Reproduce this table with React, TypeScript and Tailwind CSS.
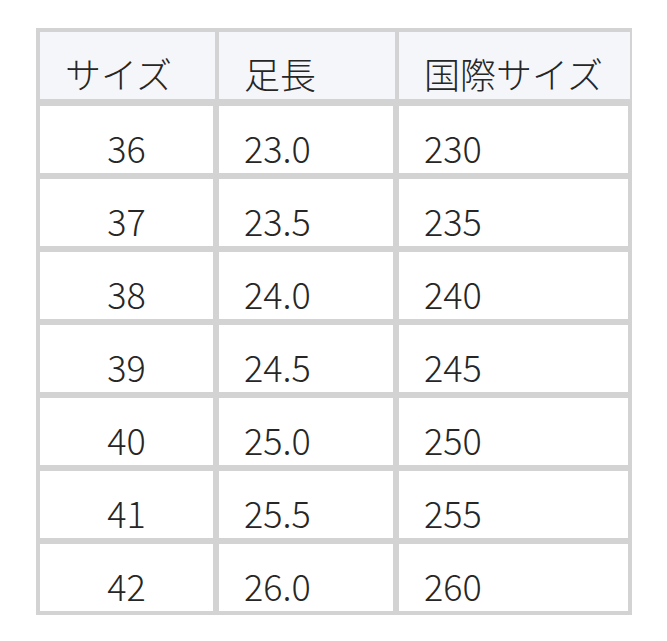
import React from "react";

const rows = [
  ["36", "23.0", "230"],
  ["37", "23.5", "235"],
  ["38", "24.0", "240"],
  ["39", "24.5", "245"],
  ["40", "25.0", "250"],
  ["41", "25.5", "255"],
  ["42", "26.0", "260"],
];

const headers = ["サイズ", "足長", "国際サイズ"];

export default function App() {
  return (
    <div
      className="w-[667px] h-[641px] bg-white pt-[28px] pl-[36px] text-[#262626] text-[36px] leading-[1.2] font-light"
      style={{ fontFamily: '"Noto Sans CJK JP", "Noto Sans", sans-serif' }}
    >
      <table className="table-fixed w-[596px] border border-[#d3d3d3] border-separate border-spacing-0">
        <colgroup>
          <col className="w-[179px]" />
          <col className="w-[180px]" />
          <col className="w-[235px]" />
        </colgroup>
        <thead>
          <tr>
            {headers.map((h) => (
              <th
                key={h}
                className="bg-[#f5f6fa] border-[#d3d3d3] border-t-[3px] border-l-[3px] border-r border-b-4 h-[74px] px-[25px] pt-[16px] text-left font-light align-middle"
              >
                {h}
              </th>
            ))}
          </tr>
        </thead>
        <tbody>
          {rows.map((r) => (
            <tr key={r[0]}>
              {r.map((c, i) => (
                <td
                  key={i}
                  className={
                    "border-[3px] border-[#d3d3d3] h-[73px] pt-[16px] align-middle " +
                    (i === 0 ? "text-center" : "text-left pl-[25px]")
                  }
                >
                  {c}
                </td>
              ))}
            </tr>
          ))}
        </tbody>
      </table>
    </div>
  );
}
